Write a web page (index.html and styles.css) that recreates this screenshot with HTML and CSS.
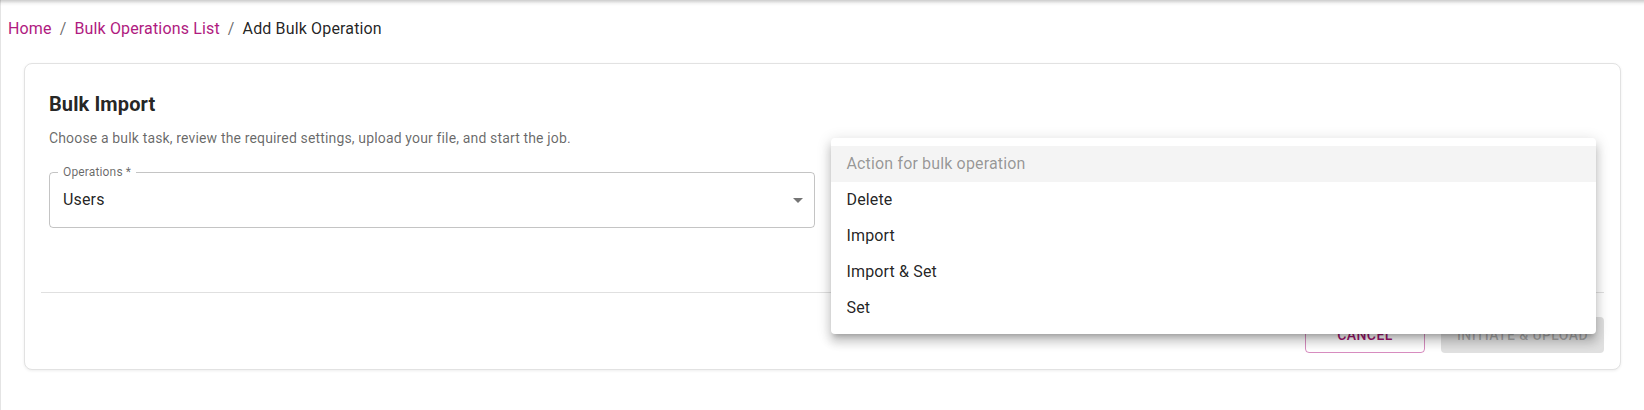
FILE: index.html
```html
<!DOCTYPE html>
<html lang="en">
<head>
<meta charset="utf-8">
<title>Add Bulk Operation</title>
<link rel="stylesheet" href="styles.css">
</head>
<body>
<div class="page">
  <div class="appbar-shadow"></div>
  <nav class="breadcrumbs">
    <a class="crumb-link" href="#">Home</a>
    <span class="crumb-sep">/</span>
    <a class="crumb-link" href="#">Bulk Operations List</a>
    <span class="crumb-sep">/</span>
    <span class="crumb-current">Add Bulk Operation</span>
  </nav>

  <section class="card">
    <div class="card-content">
      <h2 class="card-title">Bulk Import</h2>
      <p class="card-desc">Choose a bulk task, review the required settings, upload your file, and start the job.</p>
      <div class="form-grid">
        <div class="field">
          <div class="select">
            <span class="select-label">Operations *</span>
            <span class="select-value">Users</span>
            <svg class="select-arrow" viewBox="0 0 24 24" width="24" height="24"><path d="M7 10l5 5 5-5z"/></svg>
          </div>
        </div>
        <div class="field field-menu">
          <ul class="menu">
            <li class="menu-item menu-item-placeholder">Action for bulk operation</li>
            <li class="menu-item">Delete</li>
            <li class="menu-item">Import</li>
            <li class="menu-item">Import &amp; Set</li>
            <li class="menu-item">Set</li>
          </ul>
        </div>
      </div>
    </div>
    <hr class="divider">
    <div class="card-actions">
      <button class="btn btn-outlined">Cancel</button>
      <button class="btn btn-disabled" disabled>Initiate &amp; Upload</button>
    </div>
  </section>
</div>
</body>
</html>
```

FILE: styles.css
```css
* { box-sizing: border-box; }

html, body {
  margin: 0;
  padding: 0;
  background: #ffffff;
}

body {
  font-family: Roboto, "Liberation Sans", Arial, sans-serif;
  color: rgba(0, 0, 0, 0.87);
  width: 1644px;
  height: 410px;
  overflow: hidden;
}

.page {
  border-left: 1px solid #e4e4e4;
  min-height: 410px;
  padding: 0 23px 0 23px;
}

.appbar-shadow {
  height: 6px;
  margin: 0 -23px 0 -24px;
  background: linear-gradient(rgba(0, 0, 0, 0.2), rgba(0, 0, 0, 0.04) 60%, rgba(0, 0, 0, 0));
}

.breadcrumbs {
  display: flex;
  align-items: center;
  margin-left: -16px;
  padding-top: 11px;
  font-size: 16px;
  line-height: 24px;
  letter-spacing: 0.15px;
}

.crumb-link {
  color: #b01a80;
  text-decoration: none;
}

.crumb-sep {
  margin: 0 8px;
  color: rgba(0, 0, 0, 0.6);
}

.crumb-current {
  color: rgba(0, 0, 0, 0.87);
}

.card {
  margin-top: 22px;
  border: 1px solid #e2e2e2;
  border-radius: 8px;
  box-shadow: 0 1px 3px rgba(0, 0, 0, 0.07);
  background: #fff;
}

.card-content {
  padding: 24px 24px 64px 24px;
}

.card-title {
  margin: 0 0 8px 0;
  font-size: 20px;
  line-height: 32px;
  font-weight: 700;
  letter-spacing: 0.1px;
  color: rgba(0, 0, 0, 0.87);
}

.card-desc {
  margin: 0 0 24px 0;
  font-size: 14px;
  line-height: 20px;
  letter-spacing: 0.15px;
  color: rgba(0, 0, 0, 0.6);
}

.form-grid {
  display: grid;
  grid-template-columns: 1fr 1fr;
  column-gap: 16px;
}

.field {
  position: relative;
  min-height: 56px;
}

.select {
  position: relative;
  height: 56px;
  border: 1px solid rgba(0, 0, 0, 0.23);
  border-radius: 4px;
  display: flex;
  align-items: center;
  padding: 0 13px;
}

.select-label {
  position: absolute;
  top: -9px;
  left: 8px;
  padding: 0 5px;
  background: #fff;
  font-size: 12px;
  line-height: 16px;
  letter-spacing: 0.15px;
  color: rgba(0, 0, 0, 0.6);
}

.select-value {
  font-size: 16px;
  line-height: 24px;
  letter-spacing: 0.15px;
  color: rgba(0, 0, 0, 0.87);
}

.select-arrow {
  margin-left: auto;
  margin-right: -9px;
  fill: rgba(0, 0, 0, 0.54);
}

.menu {
  position: absolute;
  top: -34px;
  left: 0;
  right: 0;
  margin: 0;
  padding: 8px 0;
  list-style: none;
  background: #fff;
  border-radius: 4px;
  box-shadow: 0px 5px 5px -3px rgba(0, 0, 0, 0.2),
              0px 8px 10px 1px rgba(0, 0, 0, 0.14),
              0px 3px 14px 2px rgba(0, 0, 0, 0.12);
  z-index: 10;
}

.menu-item {
  height: 36px;
  padding: 6px 16px;
  font-size: 16px;
  line-height: 24px;
  letter-spacing: 0.15px;
  color: rgba(0, 0, 0, 0.87);
}

.menu-item-placeholder {
  background: #f4f4f4;
  color: rgba(0, 0, 0, 0.4);
}

.divider {
  margin: 0 16px;
  border: none;
  border-top: 1px solid #e0e0e0;
  height: 0;
}

.card-actions {
  display: flex;
  justify-content: flex-end;
  gap: 16px;
  padding: 24px 16px 16px 16px;
}

.btn {
  height: 36px;
  border-radius: 4px;
  font-family: Roboto, "Liberation Sans", Arial, sans-serif;
  font-size: 14px;
  font-weight: 500;
  letter-spacing: 0.4px;
  text-transform: uppercase;
  padding: 0 16px;
  background: none;
}

.btn-outlined {
  min-width: 120px;
  border: 1px solid rgba(176, 26, 128, 0.5);
  color: #a0166f;
}

.btn-disabled {
  border: none;
  background: rgba(0, 0, 0, 0.12);
  color: rgba(0, 0, 0, 0.26);
}
```
